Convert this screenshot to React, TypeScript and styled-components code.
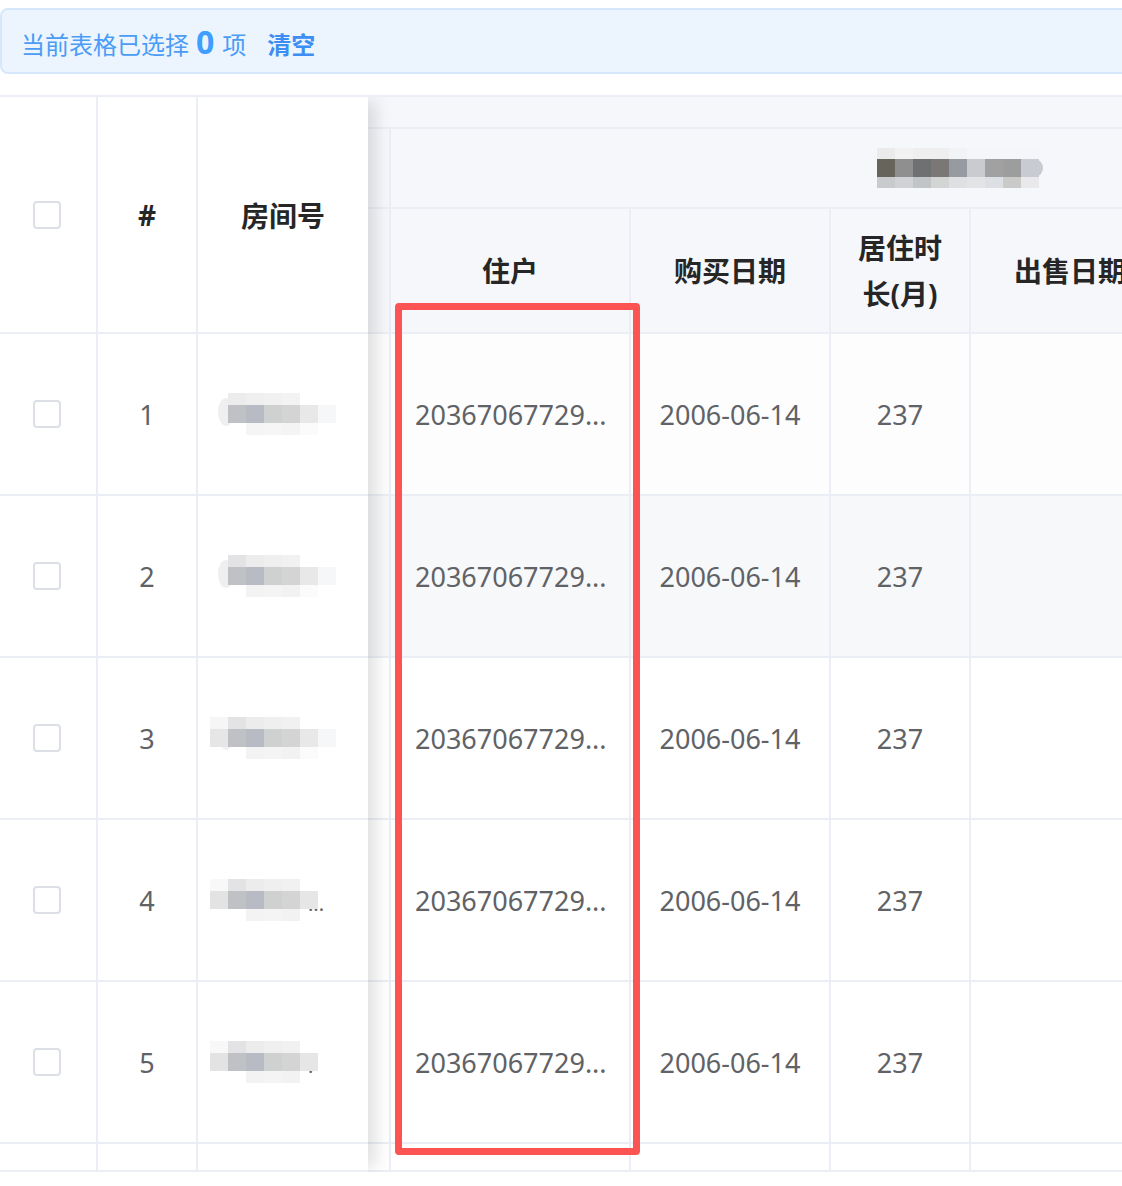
import React from "react";
import styled, { createGlobalStyle } from "styled-components";

const GlobalStyle = createGlobalStyle`
  html, body {
    margin: 0;
    padding: 0;
    background: #ffffff;
    overflow: hidden;
  }
  body {
    font-family: "Noto Sans", "Noto Sans CJK SC", sans-serif;
  }
  * { box-sizing: border-box; }
`;

const LINE = "#ebeef5";
const COLS = "21px 240px 200px 140px 200px 350px";

const Page = styled.div`
  width: 1122px;
  height: 1186px;
  overflow: hidden;
  padding-top: 8px;
`;

const Alert = styled.div`
  width: 1160px;
  height: 66px;
  border: 2px solid #d6e6fb;
  border-radius: 8px;
  background: #ecf4fe;
  display: flex;
  align-items: baseline;
  padding: 16px 19px 0;
  color: #4a9cf6;
  font-size: 24px;
  line-height: 32px;
`;

const Count = styled.span`
  font-size: 32px;
  font-weight: 700;
  color: #409eff;
  margin: 0 8px 0 7px;
`;

const ClearLink = styled.span`
  margin-left: 21px;
  font-weight: 700;
  color: #3d8ef2;
`;

const Table = styled.div`
  position: relative;
  margin-top: 21px;
  width: 1122px;
  height: 1077px;
  border-top: 2px solid ${LINE};
  display: flex;
  overflow: hidden;
`;

const Fixed = styled.div`
  position: relative;
  z-index: 1;
  width: 368px;
  flex: none;
  background: #ffffff;
  box-shadow: 12px 0 16px -4px rgba(0, 0, 0, 0.12);
`;

const FixedRow = styled.div<{ $h: number }>`
  display: grid;
  grid-template-columns: 96px 100px 172px;
  height: ${(p) => p.$h + 2}px;
  border-bottom: 2px solid ${LINE};
  background: #ffffff;
`;

const FixedCell = styled.div<{ $first?: boolean; $align?: string; $head?: boolean }>`
  display: flex;
  align-items: center;
  justify-content: ${(p) => p.$align || "center"};
  border-left: ${(p) => (p.$first ? "none" : `2px solid ${LINE}`)};
  padding: ${(p) => (p.$align === "flex-start" ? "0 0 0 12px" : "0")};
  font-size: ${(p) => (p.$head ? 28 : 27)}px;
  color: ${(p) => (p.$head ? "#262626" : "#606266")};
  font-weight: ${(p) => (p.$head ? 700 : 400)};
  overflow: hidden;
  white-space: nowrap;
`;

const Checkbox = styled.span`
  display: inline-block;
  width: 28px;
  height: 28px;
  margin-right: 2px;
  border: 2px solid #dcdfe6;
  border-radius: 4px;
  background: #ffffff;
`;

const Scroll = styled.div`
  flex: none;
  width: 1151px;
`;

const BandRow = styled.div<{ $h: number }>`
  height: ${(p) => p.$h + 2}px;
  border-bottom: 2px solid ${LINE};
  background: #f5f7fa;
`;

const GridRow = styled.div<{ $h: number; $bg: string }>`
  display: grid;
  grid-template-columns: ${COLS};
  height: ${(p) => p.$h + 2}px;
  border-bottom: 2px solid ${LINE};
  background: ${(p) => p.$bg};
`;

const Spacer = styled.div``;

const GroupCell = styled.div`
  grid-column: 2 / -1;
  border-left: 2px solid ${LINE};
  display: flex;
  align-items: center;
  justify-content: center;
  padding-left: 10px;
`;

const HeadCell = styled.div`
  border-left: 2px solid ${LINE};
  display: flex;
  align-items: center;
  justify-content: center;
  text-align: center;
  padding: 0 24px;
  font-size: 28px;
  line-height: 46px;
  font-weight: 700;
  color: #262626;
  overflow: hidden;
  white-space: nowrap;
`;

const WrapHead = styled(HeadCell)`
  white-space: normal;
`;

const BodyCell = styled.div<{ $left?: boolean }>`
  border-left: 2px solid ${LINE};
  display: flex;
  align-items: center;
  justify-content: ${(p) => (p.$left ? "flex-start" : "center")};
  padding: 0 24px;
  font-size: 27px;
  color: #606266;
  white-space: nowrap;
  overflow: hidden;
  text-overflow: ellipsis;
`;

const Ellipsis = styled.span`
  font-size: 20px;
  color: #606266;
  margin-left: -10px;
  padding-top: 6px;
`;

const Highlight = styled.div`
  position: absolute;
  left: 395px;
  top: 206px;
  width: 245px;
  height: 852px;
  border: 7px solid #fc5453;
  border-radius: 4px;
  z-index: 2;
  pointer-events: none;
`;

const MosaicSvg = styled.svg`
  display: block;
  flex: none;
  filter: blur(0.5px);
`;

type MosaicProps = {
  top: string[];
  mid: string[];
  bottom: string[];
  edge?: number;
  blob?: "left" | "right";
  blobColor?: string;
};

function Mosaic({ top, mid, bottom, edge = 12, blob, blobColor = "#efeff0" }: MosaicProps) {
  const bw = 18;
  const n = Math.max(top.length, mid.length, bottom.length);
  const w = n * bw + (blob === "right" ? 4 : 0);
  const h = edge * 2 + bw;
  return (
    <MosaicSvg width={w} height={h} viewBox={`0 0 ${w} ${h}`}>
      {blob === "left" && (
        <ellipse cx={bw - 2} cy={h / 2 - 2} rx={8} ry={edge + 2} fill={blobColor} />
      )}
      {top.map((c, i) => (
        <rect key={`t${i}`} x={i * bw} y={0} width={bw} height={edge} fill={c} />
      ))}
      {mid.map((c, i) => (
        <rect key={`m${i}`} x={i * bw} y={edge} width={bw} height={bw} fill={c} />
      ))}
      {bottom.map((c, i) => (
        <rect key={`b${i}`} x={i * bw} y={edge + bw} width={bw} height={edge} fill={c} />
      ))}
      {blob === "right" && (
        <ellipse cx={n * bw - 4} cy={edge + bw / 2} rx={8} ry={bw / 2} fill={mid[mid.length - 1]} />
      )}
    </MosaicSvg>
  );
}

const W = "rgba(255,255,255,0)";

const roomMosaics: { m: MosaicProps; tail?: string }[] = [
  {
    m: {
      top: [W, "#ececed", "#efeff0", "#f1f1f2", "#f3f3f3", W, W],
      mid: [W, "#c0c1c4", "#b8bbc3", "#cfd0d0", "#d3d4d3", "#e8e8e9", "#f6f7f9"],
      bottom: [W, W, "#f5f5f6", "#f6f6f7", "#f4f4f5", "#fbfbfb", W],
      blob: "left",
    },
  },
  {
    m: {
      top: [W, "#e3e3e5", "#ececed", "#efeff0", "#f1f1f1", W, W],
      mid: [W, "#c0c1c4", "#b8bbc3", "#cfd0d0", "#d3d4d3", "#e8e8e9", "#f6f7f9"],
      bottom: [W, W, "#f3f3f4", "#f4f4f5", "#f2f2f3", "#fbfbfb", W],
      blob: "left",
    },
  },
  {
    m: {
      top: ["#f6f6f7", "#e3e3e5", "#ececed", "#efeff0", "#f1f1f1", W, W],
      mid: ["#e6e6e7", "#c0c1c4", "#b8bbc3", "#cfd0d0", "#d3d4d3", "#e8e8e9", "#f6f7f9"],
      bottom: [W, W, "#f3f3f4", "#f4f4f5", "#f2f2f3", "#fbfbfb", W],
      blob: "left",
      blobColor: "#f1f1f2",
    },
  },
  {
    m: {
      top: ["#f8f8f9", "#e3e3e5", "#ececed", "#efeff0", "#f1f1f1", W],
      mid: ["#e3e3e4", "#c0c1c4", "#b8bbc3", "#cfd0d0", "#d3d4d3", "#e6e6e7"],
      bottom: [W, W, "#f3f3f4", "#f4f4f5", "#f2f2f3", W],
    },
    tail: "...",
  },
  {
    m: {
      top: ["#f8f8f9", "#e3e3e5", "#ececed", "#efeff0", "#f1f1f1", W],
      mid: ["#e3e3e4", "#c0c1c4", "#b8bbc3", "#cfd0d0", "#d3d4d3", "#e6e6e7"],
      bottom: [W, W, "#f3f3f4", "#f4f4f5", "#f2f2f3", W],
    },
    tail: ".",
  },
];

const groupMosaic: MosaicProps = {
  top: ["#ebebeb", "#f2f2f3", "#efeff0", "#efeff0", "#f1f3f4", "#f5f6f9", "#f5f6f9", "#f5f6f9", "#f5f6f9"],
  mid: ["#67645c", "#8f8f8f", "#6f7072", "#7b7777", "#979aa0", "#c9cbd0", "#a2a1a1", "#9c9e9e", "#c9cbd3"],
  bottom: ["#c9cacd", "#d1d2d5", "#c2c5c7", "#d3d4d4", "#dfe0e2", "#e3e4e6", "#dcdfe3", "#cacac8", "#e9e9ec"],
  edge: 11,
  blob: "right",
};

type Row = { id: number; resident: string; bought: string; months: number; sold: string };

const rows: Row[] = [1, 2, 3, 4, 5].map((id) => ({
  id,
  resident: "20367067729...",
  bought: "2006-06-14",
  months: 237,
  sold: "",
}));

const rowBg = (i: number) => (i === 1 ? "#f7f8fa" : i === 0 ? "#fdfdfe" : "#ffffff");

export default function App() {
  return (
    <Page>
      <GlobalStyle />
      <Alert>
        <span>当前表格已选择</span>
        <Count>0</Count>
        <span>项</span>
        <ClearLink>清空</ClearLink>
      </Alert>

      <Table>
        <Fixed>
          <FixedRow $h={235}>
            <FixedCell $first>
              <Checkbox />
            </FixedCell>
            <FixedCell $head>#</FixedCell>
            <FixedCell $head>房间号</FixedCell>
          </FixedRow>
          {rows.map((r, i) => (
            <FixedRow key={r.id} $h={160}>
              <FixedCell $first>
                <Checkbox />
              </FixedCell>
              <FixedCell>{r.id}</FixedCell>
              <FixedCell $align="flex-start">
                <Mosaic {...roomMosaics[i].m} />
                {roomMosaics[i].tail && <Ellipsis>{roomMosaics[i].tail}</Ellipsis>}
              </FixedCell>
            </FixedRow>
          ))}
          <FixedRow $h={26}>
            <FixedCell $first />
            <FixedCell />
            <FixedCell />
          </FixedRow>
        </Fixed>

        <Scroll>
          <BandRow $h={30} />
          <GridRow $h={78} $bg="#f5f7fa">
            <Spacer />
            <GroupCell>
              <Mosaic {...groupMosaic} />
            </GroupCell>
          </GridRow>
          <GridRow $h={123} $bg="#f5f7fa">
            <Spacer />
            <HeadCell>住户</HeadCell>
            <HeadCell>购买日期</HeadCell>
            <WrapHead>居住时长(月)</WrapHead>
            <HeadCell>出售日期</HeadCell>
            <HeadCell />
          </GridRow>
          {rows.map((r, i) => (
            <GridRow key={r.id} $h={160} $bg={rowBg(i)}>
              <Spacer />
              <BodyCell $left>{r.resident}</BodyCell>
              <BodyCell>{r.bought}</BodyCell>
              <BodyCell>{r.months}</BodyCell>
              <BodyCell>{r.sold}</BodyCell>
              <BodyCell />
            </GridRow>
          ))}
          <GridRow $h={26} $bg="#ffffff">
            <Spacer />
            <BodyCell />
            <BodyCell />
            <BodyCell />
            <BodyCell />
            <BodyCell />
          </GridRow>
        </Scroll>

        <Highlight />
      </Table>
    </Page>
  );
}
